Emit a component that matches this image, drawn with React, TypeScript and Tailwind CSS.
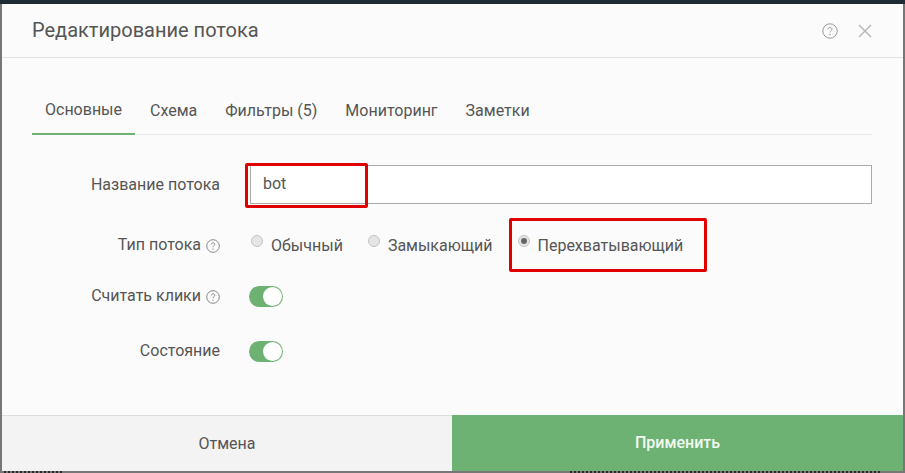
import React from 'react';

function HelpIcon({ size, className }: { size: number; className?: string }) {
  return (
    <svg width={size} height={size} viewBox="0 0 16 16" fill="none" className={className}>
      <circle cx="8" cy="8" r="7.2" stroke="currentColor" strokeWidth="1" />
      <path d="M6 6.3c0-1.2 1-1.9 2-1.9s2 .7 2 1.8c0 1.5-2 1.6-2 3.2" stroke="currentColor" strokeWidth="1" />
      <circle cx="8" cy="11.5" r=".7" fill="currentColor" />
    </svg>
  );
}

function Radio({ label, checked }: { label: string; checked?: boolean }) {
  return (
    <label className="flex items-start gap-[8px] text-[16px] leading-[22px] text-[#555]">
      <span className="mt-[2px] flex h-[12px] w-[12px] items-center justify-center rounded-full border border-[#c4c4c4] bg-[#e6e6e6]">
        {checked && <span className="h-[6px] w-[6px] rounded-full bg-[#666]" />}
      </span>
      <span className="mt-[2px]">{label}</span>
    </label>
  );
}

function Toggle() {
  return (
    <div className="-ml-px flex h-[21px] w-[34px] items-center justify-end rounded-full bg-[#6eb273] pr-[1px]">
      <span className="h-[19px] w-[19px] rounded-full bg-white" />
    </div>
  );
}

function Row({ label, help, className, children }: { label: string; help?: boolean; className?: string; children: React.ReactNode }) {
  return (
    <div className={`flex items-center ${className ?? ''}`}>
      <div className="flex w-[188px] shrink-0 items-center justify-end gap-[5px] text-[16px] text-[#555]">
        <span>{label}</span>
        {help && <HelpIcon size={14} className="mt-[2px] text-[#777]" />}
      </div>
      <div className="ml-[30px] flex-1">{children}</div>
    </div>
  );
}

export default function App() {
  const tabs = ['Основные', 'Схема', 'Фильтры (5)', 'Мониторинг', 'Заметки'];

  return (
    <div className="h-[473px] w-[905px] overflow-hidden bg-[#777] font-['Roboto',sans-serif]">
      <div className="h-[4px] bg-[#1f2c33]" />
      <div className="relative mx-[2px] flex h-[467px] flex-col bg-[#fbfbfb]">
        {/* Header */}
        <div className="flex h-[54px] shrink-0 items-center justify-between border-b border-[#e4e4e4] pl-[30px] pr-[31px]">
          <h2 className="mb-[2px] text-[20px] font-normal text-[#555]">Редактирование потока</h2>
          <div className="flex items-center gap-[20px] text-[#aaa]">
            <HelpIcon size={16} className="text-[#999]" />
            <svg width="14" height="14" viewBox="0 0 14 14" stroke="#bbb" strokeWidth="1.6">
              <path d="M1 1l12 12M13 1L1 13" />
            </svg>
          </div>
        </div>

        {/* Tabs */}
        <div className="ml-[30px] mr-[31px] mt-[30px] flex h-[47px] shrink-0 gap-[2px] border-b border-[#e8e8e8]">
          {tabs.map((tab, i) => (
            <div
              key={tab}
              className={`-mb-px flex items-center px-[13px] pb-[1px] text-[16px] text-[#555] ${
                i === 0 ? 'border-b-2 border-[#6eb273]' : ''
              }`}
            >
              {tab}
            </div>
          ))}
        </div>

        {/* Form */}
        <div className="ml-[30px] mr-[31px] flex-1 pt-[30px]">
          <Row label="Название потока">
            <div className="flex h-[39px] items-center border border-[#aaa] bg-white pb-px pl-[12px] text-[16px] text-[#555]">
              bot
            </div>
          </Row>
          <Row label="Тип потока" help className="mt-[29px]">
            <div className="ml-[1px] flex gap-[25px]">
              <Radio label="Обычный" />
              <Radio label="Замыкающий" />
              <Radio label="Перехватывающий" checked />
            </div>
          </Row>
          <Row label="Считать клики" help className="mt-[27px]">
            <Toggle />
          </Row>
          <Row label="Состояние" className="mt-[31px]">
            <Toggle />
          </Row>
        </div>

        {/* Footer */}
        <div className="flex h-[56px] shrink-0 text-[16px]">
          <div className="flex w-[450px] items-center justify-center border-t border-[#ddd] bg-[#f3f3f3] text-[#555]">
            Отмена
          </div>
          <div className="flex flex-1 items-center justify-center bg-[#6eb273] font-medium text-[#f2fbf2]">
            Применить
          </div>
        </div>

        {/* Red annotation frames */}
        <div className="absolute left-[243px] top-[159px] h-[45px] w-[123px] rounded-[2px] border-[3px] border-[#e00000]" />
        <div className="absolute left-[507px] top-[214px] h-[54px] w-[198px] rounded-[2px] border-[3px] border-[#e00000]" />
      </div>

      {/* Page behind the modal: only dark slivers of its text show under the edge */}
      <div className="flex h-[2px] justify-between pl-[4px] pr-[25px]">
        <div className="w-[58px] border-t-2 border-dotted border-[#2a2a2a]" />
        <div className="w-[310px] border-t-2 border-dotted border-[#2a2a2a]" />
      </div>
    </div>
  );
}
